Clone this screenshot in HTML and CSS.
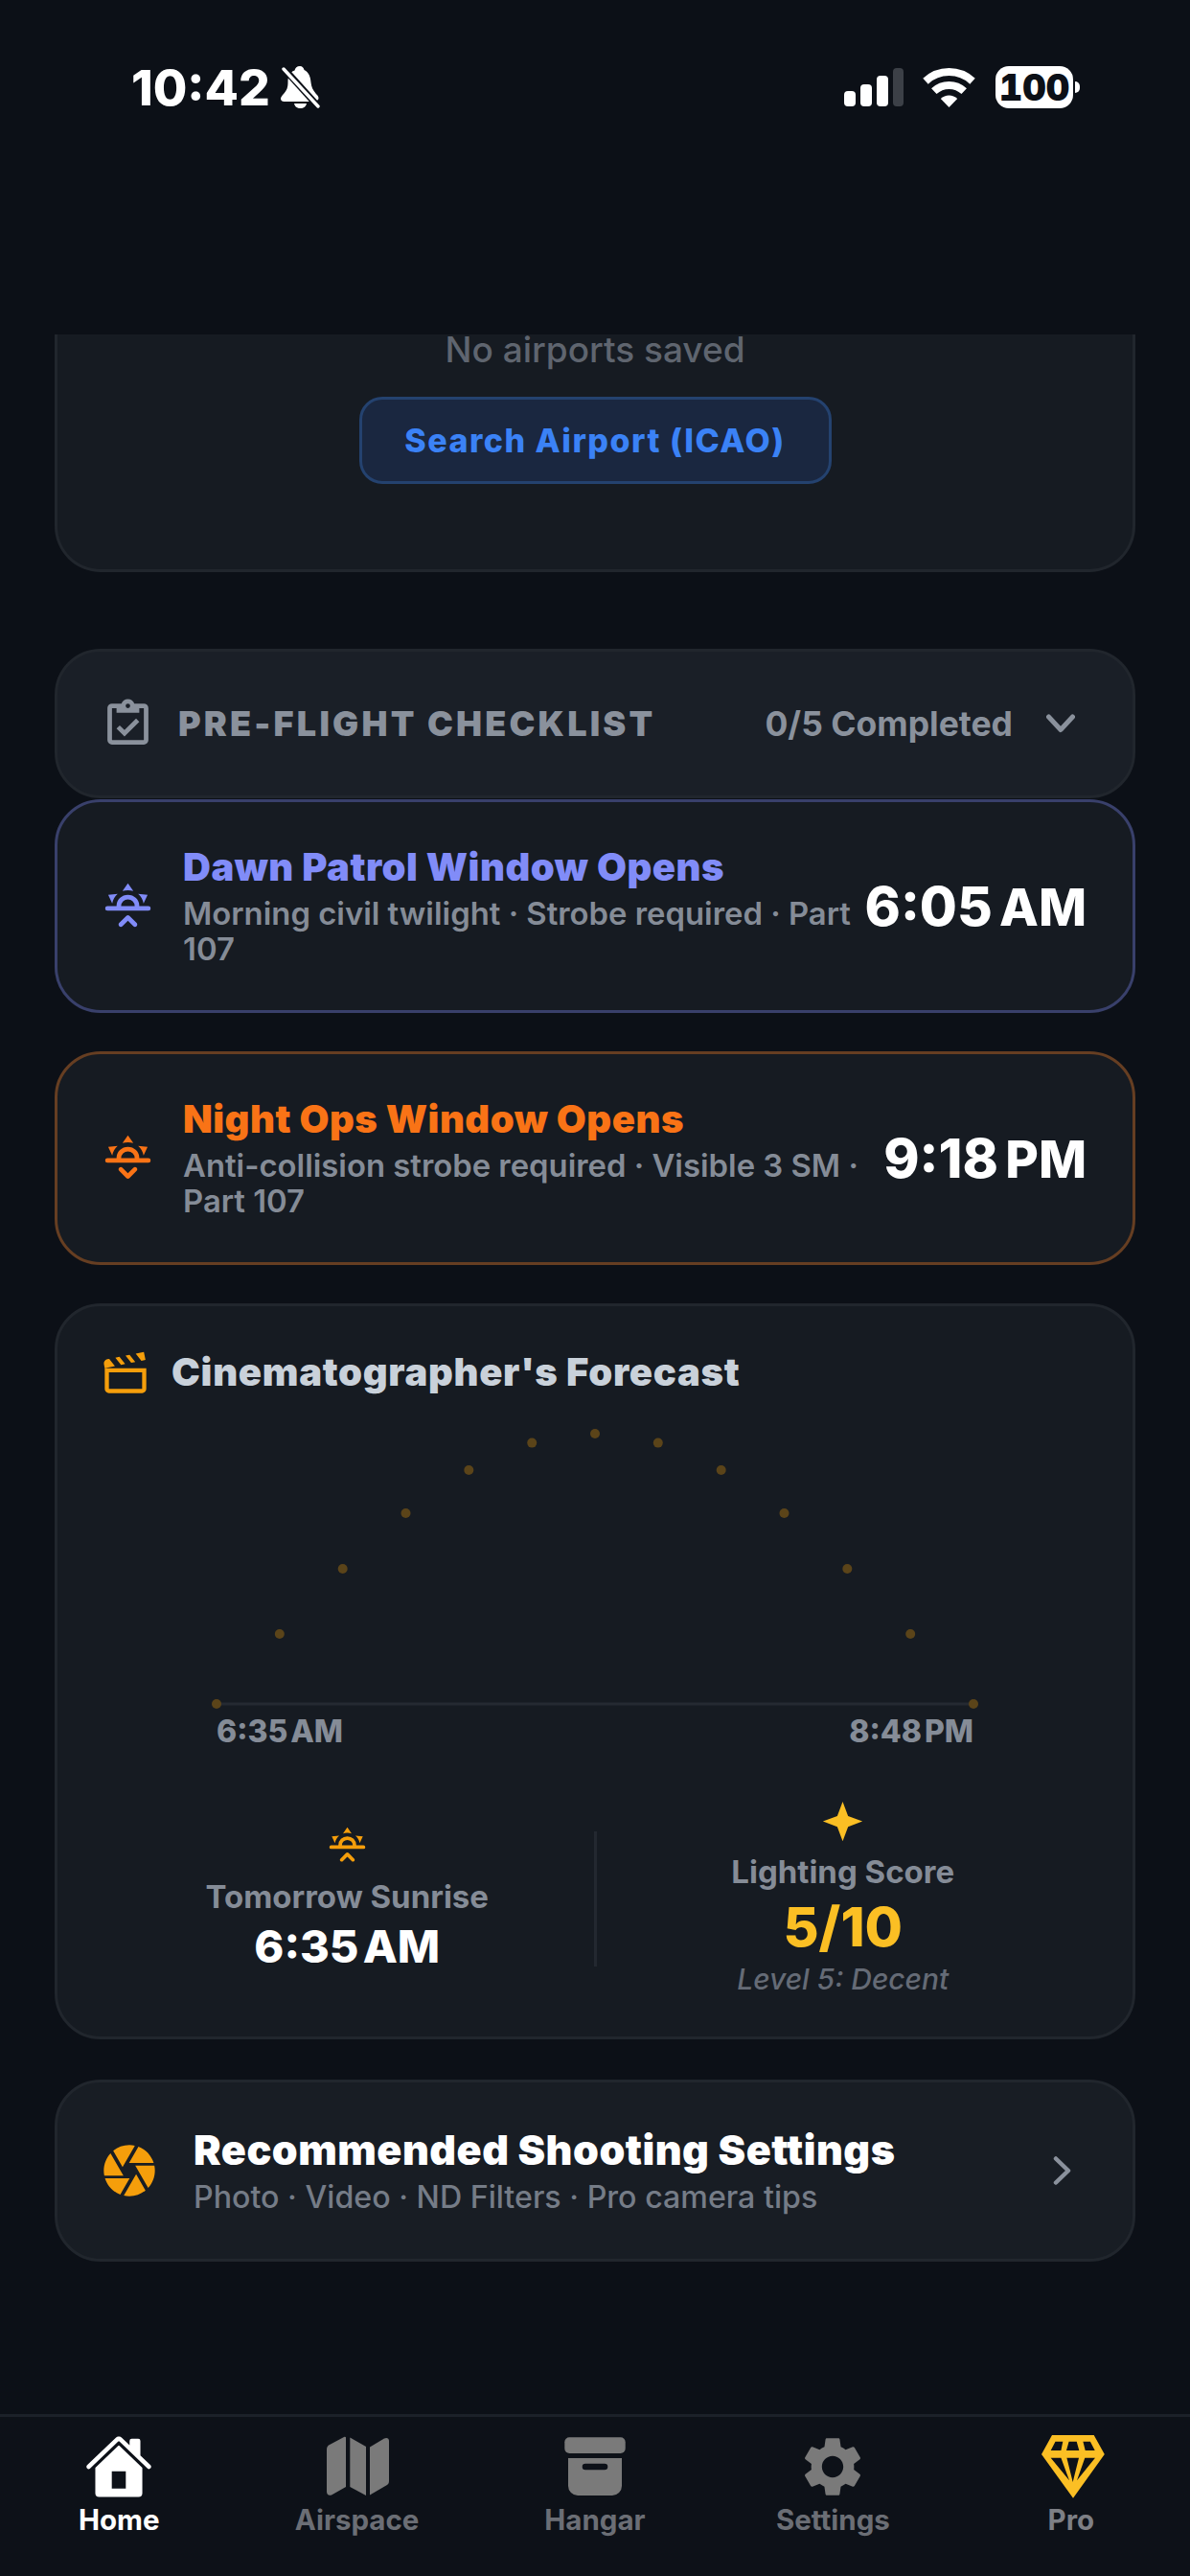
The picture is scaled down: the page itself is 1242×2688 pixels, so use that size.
FILE: index.html
```html
<!DOCTYPE html>
<html lang="en">
<head>
<meta charset="utf-8">
<title>Pre-flight</title>
<link rel="stylesheet" href="styles.css">
</head>
<body>
<div class="phone">
  <header class="top">
    <div class="status">
      <div class="status-left">
        <span class="clock">10:42</span>
        <svg class="bell" viewBox="0 0 41 44"><path fill="#fff" d="M20 0c-3 0-5 2-5.500 4.500C9 6.500 7.500 11 7.500 17c0 5-1 8.500-5 12.500C1 31 0 33 0 34c0 2 1.500 3 3.500 3h31c3 0 5-2 5-3.500 0-2-1.500-3.500-3-5-3-3.500-4.500-7-5-11.500-.5-6-2-10.500-7-13C24 2 22.500 0 20 0z"/><path fill="#fff" d="M14 39h13c-.5 3-3.200 5-6.500 5S14.500 42 14 39z"/><path stroke="#0c1017" stroke-width="7" d="M1 0l38 42"/><path stroke="#fff" stroke-width="3.400" stroke-linecap="round" d="M3 3l36 39"/></svg>
      </div>
      <div class="status-right">
        <svg class="signal" viewBox="0 0 62 40"><rect x="0" y="24" width="12" height="16" rx="4" fill="#fff"/><rect x="17" y="17" width="12" height="23" rx="4" fill="#fff"/><rect x="34" y="8" width="12" height="32" rx="4" fill="#fff"/><rect x="51" y="0" width="11" height="40" rx="4" fill="#3c4047"/></svg>
        <svg class="wifi" viewBox="0 0 55 41"><path fill="none" stroke="#fff" stroke-width="8" d="M3 13.700A36 36 0 0 1 52 13.700"/><path fill="none" stroke="#fff" stroke-width="8" d="M11.800 24.200A23 23 0 0 1 43.200 24.200"/><path fill="#fff" d="M27.500 41L18.800 32A12.500 12.500 0 0 1 36.200 32z"/></svg>
        <div class="battery"><span class="battery-level">100</span></div>
        <span class="battery-cap"></span>
      </div>
    </div>
  </header>

  <main class="scroll">
    <section class="card card-airports">
      <p class="empty">No airports saved</p>
      <button class="search-btn">Search Airport (ICAO)</button>
    </section>

    <section class="card card-check">
      <svg class="icon-57" viewBox="0 0 24 24"><path fill="#8a919c" d="M19,3H14.820C14.400,1.840 13.300,1 12,1C10.700,1 9.600,1.840 9.180,3H5A2,2 0 0,0 3,5V19A2,2 0 0,0 5,21H19A2,2 0 0,0 21,19V5A2,2 0 0,0 19,3M12,3A1,1 0 0,1 13,4A1,1 0 0,1 12,5A1,1 0 0,1 11,4A1,1 0 0,1 12,3M7,7H17V5H19V19H5V5H7V7M17,11L15.590,9.580L10.500,14.660L8.410,12.580L7,14L10.500,17.500L17,11Z"/></svg>
      <span class="check-title">PRE-FLIGHT CHECKLIST</span>
      <span class="check-count">0/5 Completed</span>
      <svg class="chev-down" viewBox="0 0 30 20"><path fill="none" stroke="#8a919c" stroke-width="5" stroke-linecap="round" stroke-linejoin="round" d="M2.500 3L15 16.500 27.500 3"/></svg>
    </section>

    <section class="card window window-dawn">
      <svg class="icon-57 window-icon" viewBox="0 0 24 24"><path fill="#818cf8" d="M3,12H7A5,5 0 0,1 12,7A5,5 0 0,1 17,12H21A1,1 0 0,1 22,13A1,1 0 0,1 21,14H3A1,1 0 0,1 2,13A1,1 0 0,1 3,12M15,12A3,3 0 0,0 12,9A3,3 0 0,0 9,12H15M12,2L14.390,5.420C13.650,5.150 12.840,5 12,5C11.160,5 10.350,5.150 9.610,5.420L12,2M3.340,7L7.500,6.650C6.900,7.160 6.360,7.780 5.940,8.500C5.500,9.240 5.250,10 5.110,10.790L3.340,7M20.650,7L18.880,10.790C18.740,10 18.470,9.230 18.050,8.500C17.630,7.780 17.100,7.150 16.500,6.640L20.650,7M12.710,16.300L15.820,19.410C16.210,19.800 16.210,20.430 15.820,20.820C15.430,21.210 14.800,21.210 14.410,20.820L12,18.410L9.590,20.820C9.200,21.210 8.570,21.210 8.180,20.820C7.790,20.430 7.790,19.800 8.180,19.410L11.290,16.300C11.500,16.100 11.740,16 12,16C12.260,16 12.500,16.100 12.710,16.300Z"/></svg>
      <div class="window-text">
        <h3 class="window-title title-dawn">Dawn Patrol Window Opens</h3>
        <p class="window-sub">Morning civil twilight · Strobe required · Part 107</p>
      </div>
      <span class="window-time">6:05 <span class="meridiem">AM</span></span>
    </section>

    <section class="card window window-night">
      <svg class="icon-57 window-icon" viewBox="0 0 24 24"><path fill="#f97316" d="M3,12H7A5,5 0 0,1 12,7A5,5 0 0,1 17,12H21A1,1 0 0,1 22,13A1,1 0 0,1 21,14H3A1,1 0 0,1 2,13A1,1 0 0,1 3,12M15,12A3,3 0 0,0 12,9A3,3 0 0,0 9,12H15M12,2L14.390,5.420C13.650,5.150 12.840,5 12,5C11.160,5 10.350,5.150 9.610,5.420L12,2M3.340,7L7.500,6.650C6.900,7.160 6.360,7.780 5.940,8.500C5.500,9.240 5.250,10 5.110,10.790L3.340,7M20.650,7L18.880,10.790C18.740,10 18.470,9.230 18.050,8.500C17.630,7.780 17.100,7.150 16.500,6.640L20.650,7M12.710,20.710L15.820,17.600C16.210,17.210 16.210,16.570 15.820,16.180C15.430,15.790 14.800,15.790 14.410,16.180L12,18.590L9.590,16.180C9.200,15.790 8.570,15.790 8.180,16.180C7.790,16.570 7.790,17.210 8.180,17.600L11.290,20.710C11.500,20.900 11.740,21 12,21C12.260,21 12.500,20.900 12.710,20.710Z"/></svg>
      <div class="window-text">
        <h3 class="window-title title-night">Night Ops Window Opens</h3>
        <p class="window-sub">Anti-collision strobe required · Visible 3 SM · Part 107</p>
      </div>
      <span class="window-time">9:18 <span class="meridiem">PM</span></span>
    </section>

    <section class="card forecast">
      <div class="forecast-head">
        <svg class="icon-52" viewBox="0 0 24 24"><path fill="#f59e0b" d="M20.840 2.180L16.910 2.960L19.650 6.430L21.620 6.050L20.840 2.180M13.970 3.540L12 3.930L14.750 7.400L16.710 7L13.970 3.540M9.070 4.500L7.100 4.910L9.850 8.370L11.810 8L9.070 4.500M4.160 5.500L3.180 5.690A2 2 0 0 0 1.610 8.040L2 10L6.900 9.030L4.160 5.500M2 10V20C2 21.110 2.900 22 4 22H20C21.110 22 22 21.110 22 20V10H2M4 12H20V20H4V12Z"/></svg>
        <h2 class="forecast-title">Cinematographer's Forecast</h2>
      </div>
      <svg class="arc" viewBox="0 0 800 292">
        <line x1="5" y1="287" x2="795" y2="287" stroke="#252a32" stroke-width="3"/>
        <g fill="#5b4419">
          <circle cx="5" cy="287" r="5"/><circle cx="70.800" cy="214" r="5"/><circle cx="136.700" cy="146" r="5"/><circle cx="202.500" cy="88" r="5"/><circle cx="268.300" cy="43" r="5"/><circle cx="334.200" cy="14.600" r="5"/><circle cx="400" cy="5" r="5"/><circle cx="465.800" cy="14.600" r="5"/><circle cx="531.700" cy="43" r="5"/><circle cx="597.500" cy="88" r="5"/><circle cx="663.300" cy="146" r="5"/><circle cx="729.200" cy="214" r="5"/><circle cx="795" cy="287" r="5"/>
        </g>
      </svg>
      <div class="arc-labels"><span>6:35 AM</span><span>8:48 PM</span></div>
      <div class="stats">
        <div class="stat">
          <svg class="icon-45" viewBox="0 0 24 24"><path fill="#f59e0b" d="M3,12H7A5,5 0 0,1 12,7A5,5 0 0,1 17,12H21A1,1 0 0,1 22,13A1,1 0 0,1 21,14H3A1,1 0 0,1 2,13A1,1 0 0,1 3,12M15,12A3,3 0 0,0 12,9A3,3 0 0,0 9,12H15M12,2L14.390,5.420C13.650,5.150 12.840,5 12,5C11.160,5 10.350,5.150 9.610,5.420L12,2M3.340,7L7.500,6.650C6.900,7.160 6.360,7.780 5.940,8.500C5.500,9.240 5.250,10 5.110,10.790L3.340,7M20.650,7L18.880,10.790C18.740,10 18.470,9.230 18.050,8.500C17.630,7.780 17.100,7.150 16.500,6.640L20.650,7M12.710,16.300L15.820,19.410C16.210,19.800 16.210,20.430 15.820,20.820C15.430,21.210 14.800,21.210 14.410,20.820L12,18.410L9.590,20.820C9.200,21.210 8.570,21.210 8.180,20.820C7.790,20.430 7.790,19.800 8.180,19.410L11.290,16.300C11.500,16.100 11.740,16 12,16C12.260,16 12.500,16.100 12.710,16.300Z"/></svg>
          <span class="stat-label stat-label-sun">Tomorrow Sunrise</span>
          <span class="stat-time">6:35 AM</span>
        </div>
        <span class="stat-divider"></span>
        <div class="stat">
          <svg class="icon-45" viewBox="0 0 24 24"><path fill="#fbbf24" d="M12,1L9,9L1,12L9,15L12,23L15,15L23,12L15,9L12,1Z"/></svg>
          <span class="stat-label stat-label-score">Lighting Score</span>
          <span class="stat-score">5/10</span>
          <span class="stat-level">Level 5: Decent</span>
        </div>
      </div>
    </section>

    <section class="card shooting">
      <svg class="icon-64" viewBox="0 0 24 24"><path fill="#f59e0b" d="M13.730,15L9.830,21.760C10.530,21.910 11.250,22 12,22C14.400,22 16.600,21.150 18.320,19.750L14.660,13.400M2.460,15C3.380,17.920 5.610,20.260 8.450,21.340L12.120,15M8.540,12L4.640,5.250C3,7 2,9.390 2,12C2,12.680 2.070,13.350 2.200,14H9.690M21.800,10H14.310L14.600,10.500L19.360,18.750C21,16.970 22,14.600 22,12C22,11.310 21.930,10.640 21.800,10M21.540,9C20.620,6.070 18.390,3.740 15.550,2.660L11.880,9M9.400,10.500L14.170,2.240C13.470,2.090 12.750,2 12,2C9.600,2 7.400,2.840 5.680,4.250L9.340,10.600L9.400,10.500Z"/></svg>
      <div class="shooting-text">
        <h3 class="shooting-title">Recommended Shooting Settings</h3>
        <p class="shooting-sub">Photo · Video · ND Filters · Pro camera tips</p>
      </div>
      <svg class="chev-right" viewBox="0 0 20 30"><path fill="none" stroke="#8a919c" stroke-width="4.500" stroke-linecap="round" stroke-linejoin="round" d="M3 2.500L16 15 3 27.500"/></svg>
    </section>
  </main>

  <nav class="tabs">
    <div class="tab tab-active">
      <svg class="tab-icon" viewBox="0 0 512 512"><path fill="#fff" fill-rule="evenodd" d="M250.500 101.280L84 261a8 8 0 00-2.470 5.790V452a28 28 0 0028 28H402.500a28 28 0 0028-28V266.790a8 8 0 00-2.470-5.790L261.560 101.280a8 8 0 00-11.060 0zM204 289h104v129H204z"/><path fill="#fff" d="M490.910 244.150l-74.800-71.560V64a16 16 0 00-16-16h-48a16 16 0 00-16 16v32l-57.920-55.380C272.770 35.140 264.710 32 256 32c-8.680 0-16.720 3.140-22.140 8.630l-212.700 203.500c-6.220 6-7 15.870-1.340 22.370A16 16 0 0043 267.560L250.500 69.280a8 8 0 0111.060 0l207.520 198.280a16 16 0 0022.590-.44c6.140-6.360 5.630-16.860-.76-22.970z"/></svg>
      <span class="tab-label">Home</span>
    </div>
    <div class="tab">
      <svg class="tab-icon" viewBox="0 0 72 72"><path fill="#7a7a7a" d="M24 5.500V57L9 65.500C6 66.500 4 65 4 62V18C4 15.500 5 14 7 13L22 5C23 4.600 24 4.800 24 5.500z"/><path fill="#7a7a7a" d="M28.300 5.500L45 15V66L28.300 57z"/><path fill="#7a7a7a" d="M49 15.500L64 6.500C66.500 5.200 69 6 69 9V51C69 53 68.200 54 67 55L49 65.500z"/></svg>
      <span class="tab-label">Airspace</span>
    </div>
    <div class="tab">
      <svg class="tab-icon" viewBox="0 0 72 72"><rect x="4.300" y="5.300" width="63.400" height="16.700" rx="5" fill="#7a7a7a"/><path fill="#7a7a7a" fill-rule="evenodd" d="M8 27H64V56A10 10 0 0 1 54 66H18A10 10 0 0 1 8 56zM26 32.700a3.300 3.300 0 0 0 0 6.600H46a3.300 3.300 0 0 0 0-6.600z"/></svg>
      <span class="tab-label">Hangar</span>
    </div>
    <div class="tab">
      <svg class="tab-icon" viewBox="0.400 0.400 23.200 23.200"><path fill="#7a7a7a" d="M19.140 12.940c.04-.3.060-.61.060-.94 0-.32-.02-.64-.07-.94l2.030-1.580c.18-.14.230-.41.120-.61l-1.920-3.320c-.12-.22-.37-.29-.59-.22l-2.390.96c-.5-.38-1.030-.7-1.620-.94l-.36-2.540c-.04-.24-.24-.41-.48-.41h-3.840c-.24 0-.43.170-.47.410l-.36 2.540c-.59.240-1.130.570-1.620.94l-2.390-.96c-.22-.08-.47 0-.59.220L2.740 8.870c-.12.210-.08.470.120.610l2.030 1.580c-.05.3-.09.630-.09.940s.02.640.07.940l-2.030 1.580c-.18.140-.23.410-.12.610l1.920 3.320c.12.220.37.290.59.220l2.390-.96c.5.380 1.030.7 1.620.94l.36 2.540c.05.240.24.410.48.410h3.840c.24 0 .44-.17.470-.41l.36-2.540c.59-.24 1.130-.56 1.620-.94l2.390.96c.22.080.47 0 .59-.22l1.920-3.320c.12-.22.070-.47-.12-.61l-2.010-1.580zM12 15.600c-1.980 0-3.600-1.620-3.600-3.600s1.620-3.600 3.600-3.600 3.600 1.620 3.600 3.600-1.620 3.600-3.600 3.600z"/></svg>
      <span class="tab-label">Settings</span>
    </div>
    <div class="tab">
      <svg class="tab-icon" viewBox="0 0 72 72"><path fill="#fbbf24" fill-rule="evenodd" d="M16 3H59.700L70.800 23 38 68.700 5 23zM19.500 9.700H27.300L25.400 19H14.700zM33.600 9.700H41.700L44.300 19H31zM48.400 9.700H55.900L60.700 19H50.700zM14.700 26.700H25.400L34 50.300zM31.400 26.700H44L37.700 52zM50.300 26.700H61L42 50.300z"/></svg>
      <span class="tab-label tab-label-pro">Pro</span>
    </div>
  </nav>
</div>
</body>
</html>
```
FILE: styles.css
```css
* { box-sizing: border-box; }
html, body { margin: 0; padding: 0; background: #0c1017; }
body { font-family: Inter, "Liberation Sans", sans-serif; color: #fff; }
h2, h3, p { margin: 0; }
svg { display: block; flex-shrink: 0; }

.phone { width: 1242px; height: 2688px; display: flex; flex-direction: column; overflow: hidden; background: #0c1017; }

.top { height: 349px; flex-shrink: 0; padding-top: 60px; }
.status { height: 62px; display: flex; align-items: center; justify-content: space-between; padding: 0 115px 0 137px; }
.status-left { display: flex; align-items: center; gap: 11px; }
.clock { font-size: 51.500px; font-weight: 800; line-height: 62px; }
.bell { width: 41px; height: 44px; }
.status-right { display: flex; align-items: center; }
.signal { width: 62px; height: 40px; margin-right: 20px; }
.wifi { width: 55px; height: 41px; margin-right: 21px; }
.battery { width: 81px; height: 44px; border-radius: 14px; background: #fff; display: flex; align-items: center; justify-content: center; }
.battery-level { color: #0c1017; font-size: 38px; font-weight: 900; line-height: 44px; font-variant-numeric: tabular-nums; }
.battery-cap { width: 5px; height: 12px; margin-left: 2px; background: #fff; border-radius: 0 6px 6px 0; }

.scroll { flex: 1; padding: 0 57px; }
.card { background: #161b22; border: 3px solid #21262d; border-radius: 48px; }

.card-airports { border-top: 0; border-radius: 0 0 48px 48px; padding: 0 0 89px; display: flex; flex-direction: column; align-items: center; }
.empty { font-size: 37px; line-height: 32px; font-weight: 500; color: #5f656f; }
.search-btn { margin-top: 33px; width: 493px; height: 91px; border: 3px solid #24426f; border-radius: 24px; background: #1a2740; color: #3b82f6; font: 800 34px/40px Inter, "Liberation Sans", sans-serif; letter-spacing: 1.500px; }

.card-check { margin-top: 80px; height: 156px; padding: 0 60px 0 45px; display: flex; align-items: center; background: #1a1f27; }
.icon-57 { width: 57px; height: 57px; }
.check-title { margin-left: 24px; font-size: 36px; font-weight: 900; letter-spacing: 3.200px; color: #8a919c; }
.check-count { margin-left: auto; font-size: 35.500px; font-weight: 700; color: #8a919c; }
.chev-down { width: 30px; height: 20px; margin-left: 35px; }

.window { display: flex; align-items: center; padding: 42px 48px 46px 45px; }
.window-dawn { margin-top: 1px; border-color: #39406b; }
.window-night { margin-top: 40px; border-color: #663e22; }
.window-icon { margin-top: 4px; }
.window-text { flex: 1; min-width: 0; margin-left: 29px; margin-right: 10px; }
.window-title { font-size: 40px; line-height: 52px; font-weight: 900; letter-spacing: 0.500px; }
.title-dawn { color: #818cf8; }
.title-night { color: #f97316; }
.window-sub { margin-top: 4px; font-size: 32.850px; line-height: 36.500px; font-weight: 600; color: #858c97; }
.window-time { margin-top: 4px; font-size: 56.500px; font-weight: 800; white-space: nowrap; word-spacing: -0.090em; }
.meridiem { font-size: 0.940em; }

.forecast { margin-top: 40px; padding: 39px 45px 41px; background: #161b22; }
.forecast-head { display: flex; align-items: center; height: 60px; }
.icon-52 { width: 52px; height: 52px; }
.forecast-title { margin-left: 22px; font-size: 40px; line-height: 60px; font-weight: 900; letter-spacing: 0.700px; color: #c9d1da; }
.arc { width: 800px; height: 292px; margin: 29px auto 0; }
.arc-labels { width: 790px; margin: 5px auto 0; display: flex; justify-content: space-between; font-size: 32px; line-height: 38px; font-weight: 800; word-spacing: -0.130em; color: #858c97; }
.stats { margin-top: 52px; display: flex; align-items: center; }
.stat { flex: 1; display: flex; flex-direction: column; align-items: center; }
.stat-divider { width: 3px; height: 141px; background: #232830; flex-shrink: 0; }
.icon-45 { width: 45px; height: 45px; }
.stat-label { font-size: 33px; line-height: 42px; font-weight: 700; color: #858c97; }
.stat-label-sun { margin-top: 10px; }
.stat-label-score { margin-top: 9px; }
.stat-time { margin-top: 2px; font-size: 47px; line-height: 58px; font-weight: 800; word-spacing: -0.130em; }
.stat-score { margin-top: 4px; font-size: 57px; line-height: 66px; font-weight: 800; color: #fbbf24; }
.stat-level { margin-top: 2px; font-size: 30px; line-height: 38px; font-style: italic; font-weight: 500; color: #656b76; }

.shooting { margin-top: 42px; height: 190px; padding: 0 63px 0 43px; display: flex; align-items: center; background: #181d24; }
.icon-64 { width: 64px; height: 64px; }
.shooting-text { flex: 1; margin-left: 35px; }
.shooting-title { font-size: 43px; line-height: 56px; font-weight: 900; letter-spacing: 0.500px; color: #fff; }
.shooting-sub { font-size: 32.200px; line-height: 44px; font-weight: 500; color: #757c87; }
.chev-right { width: 20px; height: 30px; }

.tabs { height: 169px; flex-shrink: 0; display: grid; grid-template-columns: repeat(5, 1fr); border-top: 3px solid #1c2129; background: #0d1118; padding-top: 16px; }
.tab { display: flex; flex-direction: column; align-items: center; }
.tab-icon { width: 72px; height: 72px; }
.tab-label { margin-top: -1px; font-size: 29.500px; line-height: 40px; font-weight: 700; color: #6b6e75; }
.tab-active .tab-label { color: #fff; }
.tab-label-pro { color: #7d7f85; }
```
